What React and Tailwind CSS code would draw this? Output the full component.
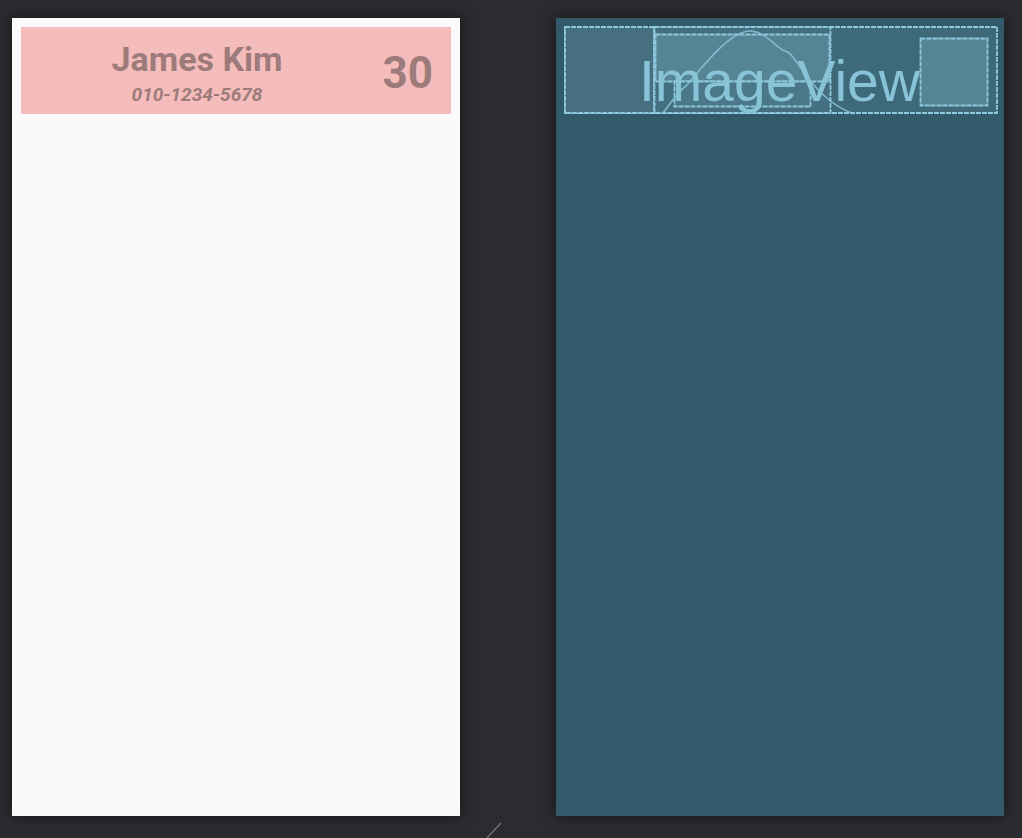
import React from "react";

const Blueprint = () => (
  <div className="relative h-[104px] px-2 pt-2">
    <svg width="434" height="89" viewBox="8 8 434 89" className="block">
      <g stroke="#8fc9de" strokeWidth="1.8" strokeDasharray="5 1" fill="none">
        <rect x="9" y="9" width="432" height="86" fill="#3f6a7b" fillOpacity="0.9" />
        <rect x="9" y="9" width="89" height="86" fill="#466f7f" />
        <rect x="98.5" y="9" width="176" height="86" fill="#446f80" />
        <rect x="99.5" y="16.5" width="174" height="47" fill="#558595" />
        <rect x="118.5" y="63.5" width="136" height="25" fill="#4a7889" />
        <rect x="364.5" y="20.5" width="67" height="67" fill="#558595" />
      </g>
      <path
        d="M107 95 C 118 80, 124 72, 130 68 C 150 45, 175 12, 195 13 C 210 14, 220 30, 229 33 C 234 34, 236 38, 242 46 C 258 70, 275 88, 298 96"
        stroke="#8cc6db"
        strokeOpacity="0.85"
        strokeWidth="1.6"
        fill="none"
      />
    </svg>
    <span className="pointer-events-none absolute left-[83px] top-[35px] text-[57px] leading-none text-[#88c3d8] font-['Liberation_Sans',Arial,sans-serif]">
      ImageView
    </span>
  </div>
);

export default function App() {
  return (
    <div className="relative w-[1022px] h-[838px] bg-[#2b2c2f] overflow-hidden font-['Roboto',sans-serif]">
      <div className="flex gap-[96px] pl-[12px] pt-[18px]">
        <div className="w-[448px] h-[798px] bg-[#fafafa] shadow-[0_0_14px_rgba(0,0,0,0.55)] p-[9px]">
          <div className="relative flex h-[87px] items-center justify-center bg-[#f5bcbc]">
            <div className="flex flex-col items-center -ml-[78px]">
              <span className="text-[34px] font-bold leading-none mt-[5px] text-[#9d7b7b]">James Kim</span>
              <span className="text-[19px] font-bold italic leading-none mt-[9px] text-[#9d7b7b]">010-1234-5678</span>
            </div>
            <span className="absolute right-[18px] top-[24px] text-[44px] font-bold leading-none text-[#9d7b7b]">30</span>
          </div>
        </div>
        <div className="w-[448px] h-[798px] bg-[#315a6b] shadow-[0_0_14px_rgba(0,0,0,0.55)]">
          <Blueprint />
        </div>
      </div>
      <svg className="absolute left-[484px] top-[821px]" width="20" height="20">
        <line x1="2" y1="18" x2="17" y2="2" stroke="#7a7b7d" strokeWidth="1.2" />
      </svg>
    </div>
  );
}
